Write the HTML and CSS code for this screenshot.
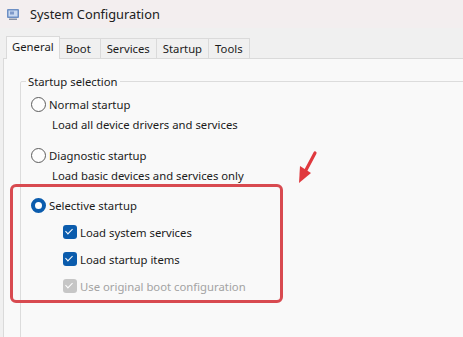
FILE: index.html
```html
<!DOCTYPE html>
<html lang="en">
<head>
  <meta charset="UTF-8">
  <title>System Configuration</title>
  <link rel="stylesheet" href="styles.css">
</head>
<body>
  <div class="window">
    <div class="titlebar">
      <svg class="app-icon" width="14" height="13" viewBox="0 0 14 13">
        <rect x="1" y="1" width="12" height="9" rx="1" fill="#6d8fc4"/>
        <rect x="2.5" y="2.5" width="9" height="6" fill="#c9d9f0"/>
        <rect x="4" y="3.5" width="4" height="3" fill="#7e99c9"/>
        <rect x="3" y="10.5" width="8" height="1.5" fill="#8a93a3"/>
      </svg>
      <span class="title">System Configuration</span>
    </div>

    <div class="tabs">
      <div class="tab active">General</div>
      <div class="tab">Boot</div>
      <div class="tab">Services</div>
      <div class="tab">Startup</div>
      <div class="tab">Tools</div>
    </div>

    <div class="panel">
      <fieldset class="group">
        <legend>Startup selection</legend>

        <div class="option">
          <div class="row"><span class="radio"></span>Normal startup</div>
          <div class="desc">Load all device drivers and services</div>
        </div>

        <div class="option">
          <div class="row"><span class="radio"></span>Diagnostic startup</div>
          <div class="desc">Load basic devices and services only</div>
        </div>

        <div class="option selective">
          <div class="row"><span class="radio checked"></span>Selective startup</div>
          <div class="check-row"><span class="checkbox checked"></span>Load system services</div>
          <div class="check-row"><span class="checkbox checked"></span>Load startup items</div>
          <div class="check-row disabled"><span class="checkbox checked"></span>Use original boot configuration</div>
          <div class="highlight"></div>
        </div>
      </fieldset>

      <svg class="arrow" width="24" height="36" viewBox="0 0 24 36">
        <line x1="19" y1="3" x2="10" y2="20" stroke="#e0393e" stroke-width="3.2" stroke-linecap="round"/>
        <polygon points="3,33 4,16 15,23" fill="#e0393e"/>
      </svg>
    </div>
  </div>
</body>
</html>
```

FILE: styles.css
```css
* { box-sizing: border-box; }
html, body { margin: 0; padding: 0; overflow: hidden; }

body {
  width: 463px;
  height: 337px;
  background: #f0f0f0;
  color: #1b1b1b;
  font-family: "Noto Sans", sans-serif;
  font-size: 11.3px;
}

.window { display: flex; flex-direction: column; height: 100%; }

/* Title bar */
.titlebar {
  height: 28px;
  display: flex;
  align-items: center;
  gap: 10px;
  padding-left: 6px;
  background: #f3eeef;
}
.title { font-size: 12.8px; color: #202020; }

/* Tabs */
.tabs {
  display: flex;
  align-items: flex-end;
  height: 30px;
  padding-left: 6px;
  background: #f0f0f0;
}
.tab {
  min-width: 41px;
  height: 20px;
  padding: 0 6px;
  line-height: 19px;
  border: 1px solid #dadada;
  border-bottom: none;
  border-left: none;
  background: #f0f0f0;
  color: #1b1b1b;
}
.tab.active {
  height: 23px;
  margin-bottom: -1px;
  padding: 0 5px;
  border-left: 1px solid #dadada;
  background: #f9f9f9;
  position: relative;
  z-index: 1;
}

/* Panel */
.panel {
  flex: 1;
  position: relative;
  overflow: hidden;
  margin-left: 3px;
  padding: 15px 0 0 16px;
  background: #f9f9f9;
  border: 1px solid #dadada;
  border-right: none;
  border-bottom: none;
}

.group {
  width: 620px;
  margin: 0;
  padding: 0 0 0 10px;
  border: 1px solid #dcdcdc;
  border-radius: 2px;
  min-height: 300px;
}
.group legend { padding: 0 2px; margin-left: -5px; color: #1b1b1b; }

.option { margin-top: 11px; }
.option:first-of-type { margin-top: 5px; }
.option.selective { margin-top: 10px; }

.row, .desc, .check-row {
  display: flex;
  align-items: center;
  height: 20px;
}
.row { gap: 3px; }
.desc { padding-left: 21px; }

.check-row { gap: 3px; padding-left: 32px; margin-top: 7px; }
.check-row.disabled { color: #a3a3a3; }

/* Radio buttons */
.radio {
  flex: none;
  width: 15px;
  height: 15px;
  border: 1px solid #5d5d5d;
  border-radius: 50%;
  background: #fdfdfd;
}
.radio.checked {
  border: 4px solid #0b5cad;
  background: #fff;
}

/* Checkboxes */
.checkbox {
  flex: none;
  position: relative;
  width: 14px;
  height: 14px;
  border-radius: 3px;
  background: #0b5cad;
}
.checkbox.checked::after {
  content: "";
  position: absolute;
  left: 4px;
  top: 2px;
  width: 3px;
  height: 6px;
  border: solid #fff;
  border-width: 0 1.5px 1.5px 0;
  transform: rotate(45deg);
}
.check-row.disabled .checkbox { background: #c6c6c6; }

/* Annotations */
.selective { position: relative; }
.highlight {
  position: absolute;
  left: -21px;
  top: -11px;
  width: 273px;
  height: 119px;
  border: 3.5px solid #d84a50;
  border-radius: 6px;
}
.arrow { position: absolute; left: 292px; top: 91px; }
```
